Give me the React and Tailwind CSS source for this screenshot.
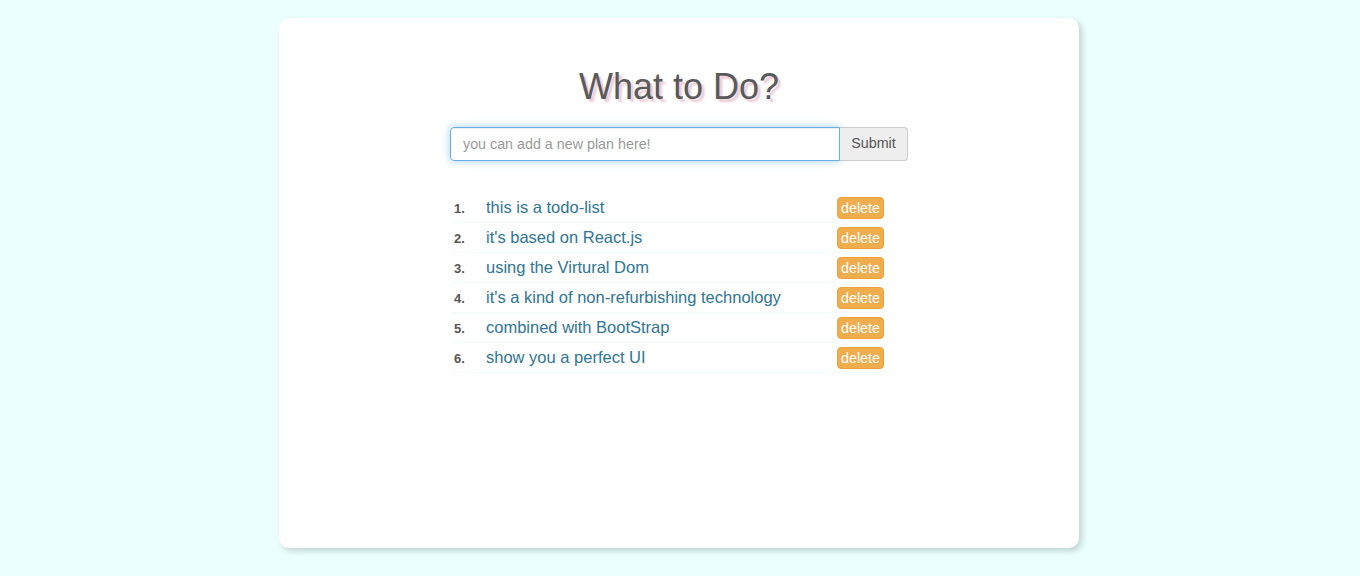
const todos = [
  "this is a todo-list",
  "it's based on React.js",
  "using the Virtural Dom",
  "it's a kind of non-refurbishing technology",
  "combined with BootStrap",
  "show you a perfect UI",
];

const App = () => {
  return (
    <div className="min-h-[576px] bg-[#ebffff] pt-[18px] font-['Liberation_Sans',Arial,sans-serif]">
      <div className="ml-[279px] w-[800px] h-[530px] bg-white rounded-[10px] shadow-[3px_3px_6px_rgba(0,0,0,0.18)] pt-[49px]">
        <h1 className="text-center text-[36px] leading-[40px] text-[#5a5a5a] [text-shadow:3px_3px_2px_#eecbd4]">
          What to Do?
        </h1>

        <div className="mx-auto mt-[20px] w-[458px] flex">
          <input
            className="w-[390px] h-[34px] px-3 text-[14.3px] text-[#555] border border-[#66afe9] rounded-l-[4px] outline-none shadow-[inset_0_1px_1px_rgba(0,0,0,0.075),0_0_8px_rgba(102,175,233,0.6)] placeholder:text-[#999]"
            placeholder="you can add a new plan here!"
          />
          <button className="w-[68px] h-[34px] text-[14.3px] text-[#555] bg-[#eeeeee] border border-l-0 border-[#cccccc] rounded-r-[4px]">
            Submit
          </button>
        </div>

        <ol className="mx-auto mt-[32px] w-[458px] pl-1 pr-6">
          {todos.map((t, i) => (
            <li
              key={i}
              className="h-[30px] flex items-center border-b border-dotted border-[#e9fcfc]"
            >
              <div className="flex-1 flex items-baseline">
                <span className="w-[32px] text-[13px] font-bold text-[#555]">{i + 1}.</span>
                <span className="text-[16.5px] text-[#2f7596]">{t}</span>
              </div>
              <button className="h-[22px] w-[47px] text-[14.3px] leading-[20px] text-white bg-[#f0ad4e] border border-[#eea236] rounded-[4px]">
                delete
              </button>
            </li>
          ))}
        </ol>
      </div>
    </div>
  );
};

export default App;
